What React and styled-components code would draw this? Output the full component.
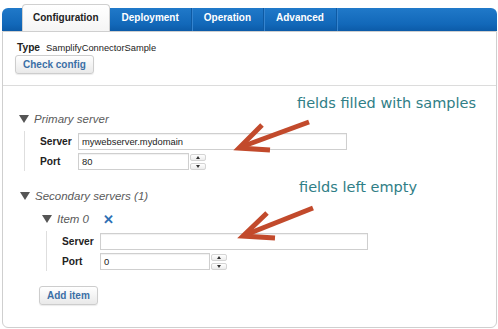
import React from "react";
import styled, { createGlobalStyle } from "styled-components";

const Global = createGlobalStyle`
  html, body { margin: 0; padding: 0; background: #fff; }
  body { font-family: "Liberation Sans", Arial, sans-serif; color: #222; }
  * { box-sizing: border-box; }
`;

const Page = styled.div`
  position: relative;
  width: 498px;
  height: 329px;
  padding: 8px 0 0 2px;
`;

const Panel = styled.div`
  width: 495px;
  display: flex;
  flex-direction: column;
`;

const TabBar = styled.div`
  display: flex;
  height: 23px;
  padding-left: 20px;
  border-radius: 6px 6px 0 0;
  background: linear-gradient(#2079c9, #1268b9 70%, #0c5ba8);
`;

const Tab = styled.div`
  padding: 0 12px;
  line-height: 20px;
  font-size: 10px;
  font-weight: bold;
  color: #fff;
  border-right: 1px solid ${(p) => (p.$active ? "transparent" : "#0e5aa3")};
  box-shadow: ${(p) => (p.$active ? "none" : "1px 0 0 #3584cf")};
  ${(p) =>
    p.$active &&
    `
    margin-top: -4px;
    height: 27px;
    padding: 3px 10px 0;
    background: linear-gradient(#ffffff, #f5f5f5);
    border: 1px solid #d0d0d0;
    border-bottom: none;
    border-radius: 4px 4px 0 0;
    color: #222;
  `}
`;

const Body = styled.div`
  height: 297px;
  border: 1px solid #cfcfcf;
  border-radius: 0 0 6px 6px;
`;

const Header = styled.div`
  padding: 10px 0 11px 12px;
  border-bottom: 1px solid #dcdcdc;
`;

const TypeRow = styled.div`
  display: flex;
  align-items: baseline;
  gap: 6px;
  margin-left: 2px;
  line-height: 12px;
`;

const Label = styled.span`
  font-size: 10.2px;
  font-weight: bold;
  color: #222;
  width: ${(p) => (p.$w ? `${p.$w}px` : "auto")};
  flex-shrink: 0;
`;

const Value = styled.span`
  font-size: 9.3px;
  color: #222;
`;

const Button = styled.button`
  display: block;
  margin-top: ${(p) => p.$mt || 0}px;
  height: 19px;
  padding: 0 7px;
  font-family: "Liberation Sans", Arial, sans-serif;
  font-size: 10px;
  font-weight: bold;
  color: #3b6fa6;
  background: linear-gradient(#ffffff, #e9e9e9);
  border: 1px solid #cdcdcd;
  border-radius: 3px;
  box-shadow: 0 1px 1px rgba(0, 0, 0, 0.08);
`;

const Section = styled.div`
  margin-left: ${(p) => p.$ml}px;
  margin-top: ${(p) => p.$mt}px;
`;

const Title = styled.div`
  display: flex;
  align-items: center;
  gap: 5px;
  height: 14px;
  font-size: 11.5px;
  font-style: italic;
  color: #5a5a5a;
`;

const Caret = styled.span`
  width: 0;
  height: 0;
  border-left: 5px solid transparent;
  border-right: 5px solid transparent;
  border-top: 8px solid #555;
`;

const Remove = styled.span`
  margin-left: 9px;
  font-style: normal;
  font-weight: bold;
  font-size: 13px;
  color: #2e6fb4;
`;

const Group = styled.div`
  margin-left: ${(p) => p.$ml}px;
  margin-top: 5px;
  padding: 2px 0 1px 15px;
  border-left: 1px solid #dedede;
  display: flex;
  flex-direction: column;
  gap: 3px;
`;

const Row = styled.div`
  display: flex;
  align-items: center;
`;

const Input = styled.div`
  width: ${(p) => p.$w}px;
  height: 17px;
  padding-left: 3px;
  border: 1px solid #cfcfcf;
  box-shadow: inset 0 1px 1px rgba(0, 0, 0, 0.06);
  font-size: 9.4px;
  line-height: 15px;
  color: #222;
  background: #fff;
`;

const Spinner = styled.div`
  display: flex;
  flex-direction: column;
  gap: 2px;
  margin-left: 1px;
`;

const SpinBtn = styled.div`
  width: 16px;
  height: 7px;
  border: 1px solid #d4d4d4;
  border-radius: 2px;
  background: linear-gradient(#fff, #ececec);
  display: flex;
  align-items: center;
  justify-content: center;
  &::after {
    content: "";
    border-left: 2.5px solid transparent;
    border-right: 2.5px solid transparent;
    ${(p) => (p.$up ? "border-bottom: 3px solid #333;" : "border-top: 3px solid #333;")}
  }
`;

const Note = styled.div`
  position: absolute;
  left: ${(p) => p.$x}px;
  top: ${(p) => p.$y}px;
  font-family: "DejaVu Sans", Verdana, sans-serif;
  font-size: 14.5px;
  line-height: 17px;
  color: #2f7e86;
  white-space: nowrap;
`;

const Overlay = styled.svg`
  position: absolute;
  left: 0;
  top: 0;
  pointer-events: none;
`;

function NumberField({ value, w }) {
  return (
    <Row>
      <Input $w={w}>{value}</Input>
      <Spinner>
        <SpinBtn $up />
        <SpinBtn />
      </Spinner>
    </Row>
  );
}

export default function App() {
  return (
    <>
      <Global />
      <Page>
        <Panel>
          <TabBar>
            <Tab $active>Configuration</Tab>
            <Tab>Deployment</Tab>
            <Tab>Operation</Tab>
            <Tab>Advanced</Tab>
          </TabBar>
          <Body>
            <Header>
              <TypeRow>
                <Label>Type</Label>
                <Value>SamplifyConnectorSample</Value>
              </TypeRow>
              <Button $mt={1}>Check config</Button>
            </Header>

            <Section $ml={16} $mt={26}>
              <Title>
                <Caret />
                Primary server
              </Title>
              <Group $ml={5}>
                <Row>
                  <Label $w={38}>Server</Label>
                  <Input $w={269}>mywebserver.mydomain</Input>
                </Row>
                <Row>
                  <Label $w={38}>Port</Label>
                  <NumberField value="80" w={111} />
                </Row>
              </Group>
            </Section>

            <Section $ml={17} $mt={18}>
              <Title>
                <Caret />
                Secondary servers (1)
              </Title>
              <Section $ml={22} $mt={9}>
                <Title>
                  <Caret />
                  Item 0
                  <Remove>✕</Remove>
                </Title>
                <Group $ml={4}>
                  <Row>
                    <Label $w={38}>Server</Label>
                    <Input $w={268} />
                  </Row>
                  <Row>
                    <Label $w={38}>Port</Label>
                    <NumberField value="0" w={110} />
                  </Row>
                </Group>
              </Section>
              <Section $ml={19} $mt={15}>
                <Button>Add item</Button>
              </Section>
            </Section>
          </Body>
        </Panel>

        <Note $x={297} $y={95}>fields filled with samples</Note>
        <Note $x={299} $y={179}>fields left empty</Note>
        <Overlay width="498" height="329" viewBox="0 0 498 329">
          <g fill="none" stroke="#c24a2c" strokeWidth="5" strokeLinejoin="miter" strokeLinecap="butt">
            <path d="M309 122 L241 147" />
            <path d="M262 125 L239 148 L270 150" />
            <path d="M313 208 L245 235" />
            <path d="M267 213 L243 236 L275 238" />
          </g>
        </Overlay>
      </Page>
    </>
  );
}
